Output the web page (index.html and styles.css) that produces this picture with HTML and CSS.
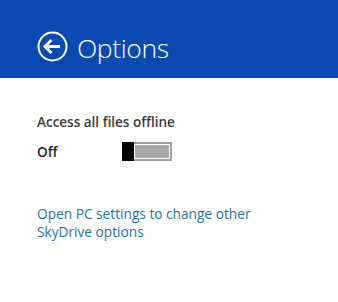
FILE: index.html
```html
<!DOCTYPE html>
<html lang="en">
<head>
  <meta charset="UTF-8">
  <title>Options</title>
  <link rel="stylesheet" href="styles.css">
</head>
<body>
  <div class="header">
    <svg class="back" width="31" height="31" viewBox="0 0 31 31">
      <circle cx="15.5" cy="15.5" r="14" fill="none" stroke="#fff" stroke-width="2"/>
      <path d="M8 15.5 H23 M14.5 9 L8 15.5 L14.5 22" fill="none" stroke="#fff" stroke-width="3"/>
    </svg>
    <h1>Options</h1>
  </div>

  <div class="content">
    <div class="setting-label">Access all files offline</div>
    <div class="setting-row">
      <span class="state">Off</span>
      <div class="toggle">
        <div class="thumb"></div>
        <div class="track"></div>
      </div>
    </div>
    <a class="link" href="#">Open PC settings to change other SkyDrive options</a>
  </div>
</body>
</html>
```

FILE: styles.css
```css
body {
  margin: 0;
  background: #fff;
  font-family: 'Segoe UI', 'Open Sans', sans-serif;
}
.header {
  background: #0a49b0;
  height: 78px;
  display: flex;
  align-items: flex-end;
  padding: 0 0 14px 37px;
  box-sizing: border-box;
  gap: 9px;
}
.back {
  display: block;
  margin-bottom: 2px;
}
.header h1 {
  margin: 0;
  color: #fff;
  font-weight: 300;
  font-size: 26.5px;
  letter-spacing: -0.4px;
  line-height: 32px;
}
.content {
  padding: 35px 0 0 37px;
  width: 232px;
}
.setting-label {
  font-size: 13.5px;
  font-weight: 600;
  color: #3a3a3a;
  line-height: 18px;
}
.setting-row {
  display: flex;
  align-items: center;
  margin-top: 11px;
}
.state {
  width: 85px;
  font-size: 13.5px;
  font-weight: 600;
  color: #222;
}
.toggle {
  display: flex;
  width: 50px;
  height: 19px;
}
.thumb {
  width: 12px;
  background: #000;
}
.track {
  flex: 1;
  background: #aaa;
  border: 2px solid #a0a0a0;
  box-shadow: inset 0 0 0 1px #fff;
  border-left: none;
}
.link {
  display: block;
  margin-top: 44px;
  color: #1c73aa;
  text-decoration: none;
  font-size: 13.7px;
  line-height: 18px;
}
```
